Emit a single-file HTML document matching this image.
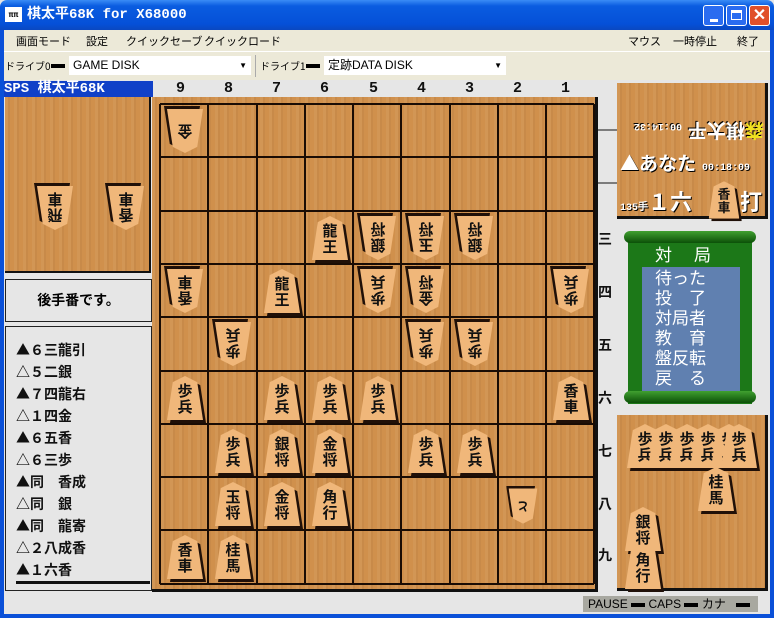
<!DOCTYPE html>
<html><head><meta charset="utf-8"><style>
*{margin:0;padding:0;box-sizing:border-box}
body{width:774px;height:618px;overflow:hidden;position:relative;background:#e6e6e6;font-family:"Liberation Sans","Noto Sans CJK JP",sans-serif}
.a{position:absolute}
.wood{background:#d0904c;background-image:repeating-linear-gradient(90deg,rgba(255,255,255,.05) 0 3px,rgba(0,0,0,.04) 3px 5px,rgba(255,255,255,0) 5px 9px)}
.pc{position:absolute;width:36px;height:44px}
.pc .s{position:absolute;left:3px;top:3px;width:36px;height:44px;background:#201008;clip-path:polygon(50% 0,84% 14%,100% 100%,0 100%,16% 14%)}
.pc .f{position:absolute;left:0;top:0;width:36px;height:44px;background:#f0b77a;clip-path:polygon(50% 0,84% 14%,100% 100%,0 100%,16% 14%);text-align:center;font:bold 15px/16px "Noto Sans CJK JP",sans-serif;color:#111;padding-top:7px}
.g{transform:rotate(180deg)}
.rk{position:absolute;left:598px;font:bold 14px "Noto Sans CJK JP",sans-serif;color:#111}
.cn{position:absolute;top:80px;font:bold 15px "Liberation Mono",monospace;color:#111}
.ml div{height:22px;font:bold 14px/22px "Noto Sans CJK JP",sans-serif;color:#111}
.mn{position:absolute;top:34px;font:11px/14px 'Noto Sans CJK JP',sans-serif;color:#000;white-space:nowrap}
</style></head><body>
<div class="a" style="left:0;top:0;width:774px;height:30px;background:linear-gradient(#3a8cf6,#0a5ce0 20%,#0550d8 80%,#0a48c0);border-radius:7px 7px 0 0"></div>
<div class="a" style="left:5px;top:7px;width:17px;height:15px;background:#fff;font:bold 8px/15px monospace;color:#000;text-align:center">ππ</div>
<div class="a" style="left:27px;top:6px;color:#fff;font:bold 14px/18px 'Liberation Mono','Noto Sans CJK JP',monospace">棋太平68K for X68000</div>
<div class="a" style="left:703px;top:5px;width:21px;height:21px;background:#2a6cf0;border:1px solid #fff;border-radius:3px"><div class="a" style="left:6px;top:13px;width:8px;height:3px;background:#fff"></div></div>
<div class="a" style="left:726px;top:5px;width:21px;height:21px;background:#2a6cf0;border:1px solid #fff;border-radius:3px"><div class="a" style="left:4px;top:4px;width:11px;height:10px;border:1px solid #fff;border-top:3px solid #fff"></div></div>
<div class="a" style="left:749px;top:5px;width:21px;height:21px;background:#e0502a;border:1px solid #fff;border-radius:3px;color:#fff;font:bold 16px/19px sans-serif;text-align:center">✕</div>
<div class="a" style="left:0;top:30px;width:4px;height:588px;background:#0a50d8"></div>
<div class="a" style="left:770px;top:30px;width:4px;height:588px;background:#0a50d8"></div>
<div class="a" style="left:0;top:614px;width:774px;height:4px;background:#0a50d8"></div>
<div class="a" style="left:4px;top:30px;width:766px;height:50px;background:#ece9d8"></div>
<div class="a" style="left:4px;top:51px;width:766px;height:1px;background:#fff"></div>
<div class="mn" style="left:16px">画面モード</div>
<div class="mn" style="left:86px">設定</div>
<div class="mn" style="left:126px">クイックセーブ</div>
<div class="mn" style="left:204px">クイックロード</div>
<div class="mn" style="left:628px">マウス</div>
<div class="mn" style="left:673px">一時停止</div>
<div class="mn" style="left:737px">終了</div>
<div class="a" style="top:58px;left:5px;font:10px/16px 'Noto Sans CJK JP',sans-serif;white-space:nowrap">ドライブ0</div>
<div class="a" style="left:51px;top:64px;width:14px;height:4px;background:#000"></div>
<div class="a" style="left:69px;top:56px;width:182px;height:19px;background:#fff;font:12px/19px 'Liberation Sans',sans-serif;padding-left:4px">GAME DISK<span style="position:absolute;right:4px;font-size:8px">▼</span></div>
<div class="a" style="left:255px;top:55px;width:1px;height:22px;background:#aaa"></div>
<div class="a" style="top:58px;left:260px;font:10px/16px 'Noto Sans CJK JP',sans-serif;white-space:nowrap">ドライブ1</div>
<div class="a" style="left:306px;top:64px;width:14px;height:4px;background:#000"></div>
<div class="a" style="left:324px;top:56px;width:182px;height:19px;background:#fff;font:12px/19px 'Liberation Sans','Noto Sans CJK JP',sans-serif;padding-left:4px">定跡DATA DISK<span style="position:absolute;right:4px;font-size:8px">▼</span></div>
<div class="a" style="left:4px;top:81px;width:149px;height:16px;background:#1040c8;color:#fff;font:bold 14px/16px 'Liberation Mono','Noto Sans CJK JP',monospace">SPS 棋太平68K</div>
<div class="cn" style="left:176px">9</div><div class="cn" style="left:224px">8</div><div class="cn" style="left:272px">7</div><div class="cn" style="left:320px">6</div><div class="cn" style="left:369px">5</div><div class="cn" style="left:417px">4</div><div class="cn" style="left:465px">3</div><div class="cn" style="left:513px">2</div><div class="cn" style="left:561px">1</div>
<div class="a wood" style="left:5px;top:97px;width:146px;height:176px;border-right:2px solid #111;border-bottom:2px solid #111"></div>
<div class="a" style="left:5px;top:279px;width:147px;height:43px;border:1px solid #222;background:#e6e6e6;font:bold 14px/41px 'Noto Sans CJK JP',sans-serif;text-align:center">後手番です。</div>
<div class="a ml" style="left:5px;top:326px;width:147px;height:265px;border:1px solid #222;padding:12px 0 0 10px">
<div>▲６三龍引</div><div>△５二銀</div><div>▲７四龍右</div><div>△１四金</div><div>▲６五香</div><div>△６三歩</div><div>▲同　香成</div><div>△同　銀</div><div>▲同　龍寄</div><div>△２八成香</div><div>▲１六香</div>
<div style="height:3px;width:134px;background:#111;margin-top:0"></div>
</div>
<div class="a wood" style="left:152px;top:97px;width:446px;height:495px;border-right:3px solid #111;border-bottom:3px solid #111"></div>
<svg class="a" style="left:0;top:0" width="774" height="618">
<g stroke="#1a0c04" stroke-width="2">
<line x1="160" y1="104" x2="160" y2="584"/><line x1="208" y1="104" x2="208" y2="584"/><line x1="257" y1="104" x2="257" y2="584"/><line x1="305" y1="104" x2="305" y2="584"/><line x1="353" y1="104" x2="353" y2="584"/><line x1="401" y1="104" x2="401" y2="584"/><line x1="450" y1="104" x2="450" y2="584"/><line x1="498" y1="104" x2="498" y2="584"/><line x1="546" y1="104" x2="546" y2="584"/><line x1="594" y1="104" x2="594" y2="584"/>
<line x1="160" y1="104" x2="594" y2="104"/><line x1="160" y1="157" x2="594" y2="157"/><line x1="160" y1="211" x2="594" y2="211"/><line x1="160" y1="264" x2="594" y2="264"/><line x1="160" y1="317" x2="594" y2="317"/><line x1="160" y1="371" x2="594" y2="371"/><line x1="160" y1="424" x2="594" y2="424"/><line x1="160" y1="477" x2="594" y2="477"/><line x1="160" y1="530" x2="594" y2="530"/><line x1="160" y1="584" x2="594" y2="584"/>
</g>
<g stroke="#111" stroke-width="1"><line x1="598" y1="130" x2="617" y2="130"/><line x1="598" y1="183" x2="617" y2="183"/></g>
</svg>
<div class="rk" style="top:229px">三</div><div class="rk" style="top:282px">四</div><div class="rk" style="top:335px">五</div><div class="rk" style="top:388px">六</div><div class="rk" style="top:441px">七</div><div class="rk" style="top:494px">八</div><div class="rk" style="top:545px">九</div>

<div class="pc g" style="left:167px;top:109px"><div class="s"></div><div class="f" style="padding-top:14px">金</div></div>
<div class="pc" style="left:312px;top:216px"><div class="s"></div><div class="f">龍<br>王</div></div>
<div class="pc g" style="left:360px;top:216px"><div class="s"></div><div class="f">銀<br>将</div></div>
<div class="pc g" style="left:408px;top:216px"><div class="s"></div><div class="f">玉<br>将</div></div>
<div class="pc g" style="left:457px;top:216px"><div class="s"></div><div class="f">銀<br>将</div></div>
<div class="pc g" style="left:167px;top:269px"><div class="s"></div><div class="f">香<br>車</div></div>
<div class="pc" style="left:264px;top:269px"><div class="s"></div><div class="f">龍<br>王</div></div>
<div class="pc g" style="left:360px;top:269px"><div class="s"></div><div class="f">歩<br>兵</div></div>
<div class="pc g" style="left:408px;top:269px"><div class="s"></div><div class="f">金<br>将</div></div>
<div class="pc g" style="left:553px;top:269px"><div class="s"></div><div class="f">歩<br>兵</div></div>
<div class="pc g" style="left:215px;top:322px"><div class="s"></div><div class="f">歩<br>兵</div></div>
<div class="pc g" style="left:408px;top:322px"><div class="s"></div><div class="f">歩<br>兵</div></div>
<div class="pc g" style="left:457px;top:322px"><div class="s"></div><div class="f">歩<br>兵</div></div>
<div class="pc" style="left:167px;top:376px"><div class="s"></div><div class="f">歩<br>兵</div></div>
<div class="pc" style="left:264px;top:376px"><div class="s"></div><div class="f">歩<br>兵</div></div>
<div class="pc" style="left:312px;top:376px"><div class="s"></div><div class="f">歩<br>兵</div></div>
<div class="pc" style="left:360px;top:376px"><div class="s"></div><div class="f">歩<br>兵</div></div>
<div class="pc" style="left:553px;top:376px"><div class="s"></div><div class="f">香<br>車</div></div>
<div class="pc" style="left:215px;top:429px"><div class="s"></div><div class="f">歩<br>兵</div></div>
<div class="pc" style="left:264px;top:429px"><div class="s"></div><div class="f">銀<br>将</div></div>
<div class="pc" style="left:312px;top:429px"><div class="s"></div><div class="f">金<br>将</div></div>
<div class="pc" style="left:408px;top:429px"><div class="s"></div><div class="f">歩<br>兵</div></div>
<div class="pc" style="left:457px;top:429px"><div class="s"></div><div class="f">歩<br>兵</div></div>
<div class="pc" style="left:215px;top:482px"><div class="s"></div><div class="f">玉<br>将</div></div>
<div class="pc" style="left:264px;top:482px"><div class="s"></div><div class="f">金<br>将</div></div>
<div class="pc" style="left:312px;top:482px"><div class="s"></div><div class="f">角<br>行</div></div>
<div class="pc" style="left:505px;top:484px;transform:rotate(180deg) scale(.8)"><div class="s"></div><div class="f" style="padding-top:14px">と</div></div>
<div class="pc" style="left:167px;top:535px"><div class="s"></div><div class="f">香<br>車</div></div>
<div class="pc" style="left:215px;top:535px"><div class="s"></div><div class="f">桂<br>馬</div></div>
<div class="pc g" style="left:37px;top:186px"><div class="s"></div><div class="f">飛<br>車</div></div>
<div class="pc g" style="left:108px;top:186px"><div class="s"></div><div class="f">香<br>車</div></div>

<div class="a wood" style="left:617px;top:83px;width:151px;height:136px;border-right:3px solid #111;border-bottom:3px solid #111"></div>
<div class="a" style="left:622px;top:118px;width:142px;height:26px;font:bold 10px/26px 'Liberation Mono',monospace;color:#fff;transform:rotate(180deg);text-shadow:1px 1px #000;white-space:nowrap"><span style="font:bold 19px/26px 'Noto Sans CJK JP',sans-serif"><span style="color:#f0e020">森</span>棋太平</span> 00:14:32</div>
<div class="a" style="left:620px;top:150px;font:bold 10px/26px 'Liberation Mono',monospace;color:#fff;text-shadow:1px 1px #000;white-space:nowrap"><span style="font:bold 19px/26px 'Noto Sans CJK JP',sans-serif">▲あなた</span> 00:18:09</div>
<div class="a" style="left:620px;top:186px;color:#fff;text-shadow:1px 1px #000;white-space:nowrap;font:bold 10px/30px 'Liberation Mono',monospace">135手<span style="font:bold 22px/30px 'Noto Sans CJK JP',sans-serif">１六</span></div>
<div class="pc" style="left:706px;top:178px;transform:scale(.85)"><div class="s"></div><div class="f">香<br>車</div></div>
<div class="a" style="left:740px;top:186px;color:#fff;font:bold 22px/30px 'Noto Sans CJK JP',sans-serif;text-shadow:1px 1px #000">打</div>
<div class="a" style="left:628px;top:236px;width:124px;height:168px;background:#1c7818"></div>
<div class="a" style="left:624px;top:231px;width:132px;height:12px;background:linear-gradient(#40a030,#0c5008);border-radius:6px"></div>
<div class="a" style="left:624px;top:391px;width:132px;height:12px;background:linear-gradient(#40a030,#0c5008);border-radius:6px"></div>
<div class="a" style="left:655px;top:244px;color:#fff;font:17px/20px 'Noto Sans CJK JP',sans-serif;letter-spacing:22px">対局</div>
<div class="a" style="left:642px;top:267px;width:98px;height:124px;background:#6080b0;color:#fff;font:17px/20px 'Noto Sans CJK JP',sans-serif;padding:0 0 0 13px">待った<br>投　了<br>対局者<br>教　育<br>盤反転<br>戻　る</div>
<div class="a wood" style="left:617px;top:415px;width:151px;height:176px;border-right:3px solid #111;border-bottom:3px solid #111"></div>
<div class="pc" style="left:627px;top:424px"><div class="s"></div><div class="f">歩<br>兵</div></div>
<div class="pc" style="left:648px;top:424px"><div class="s"></div><div class="f">歩<br>兵</div></div>
<div class="pc" style="left:669px;top:424px"><div class="s"></div><div class="f">歩<br>兵</div></div>
<div class="pc" style="left:690px;top:424px"><div class="s"></div><div class="f">歩<br>兵</div></div>
<div class="pc" style="left:711px;top:424px"><div class="s"></div><div class="f">歩<br>兵</div></div>
<div class="pc" style="left:721px;top:424px"><div class="s"></div><div class="f">歩<br>兵</div></div>
<div class="pc" style="left:698px;top:467px"><div class="s"></div><div class="f">桂<br>馬</div></div>
<div class="pc" style="left:625px;top:507px"><div class="s"></div><div class="f">銀<br>将</div></div>
<div class="pc" style="left:625px;top:545px"><div class="s"></div><div class="f">角<br>行</div></div>
<div class="a" style="left:583px;top:596px;width:175px;height:16px;background:#a8a8a0;font:12px/16px 'Liberation Sans','Noto Sans CJK JP',sans-serif;color:#000;padding-left:5px;white-space:nowrap">PAUSE <span style="display:inline-block;width:14px;height:4px;background:#000;vertical-align:middle"></span> CAPS <span style="display:inline-block;width:14px;height:4px;background:#000;vertical-align:middle"></span> カナ&nbsp;&nbsp; <span style="display:inline-block;width:14px;height:4px;background:#000;vertical-align:middle"></span></div>
</body></html>
